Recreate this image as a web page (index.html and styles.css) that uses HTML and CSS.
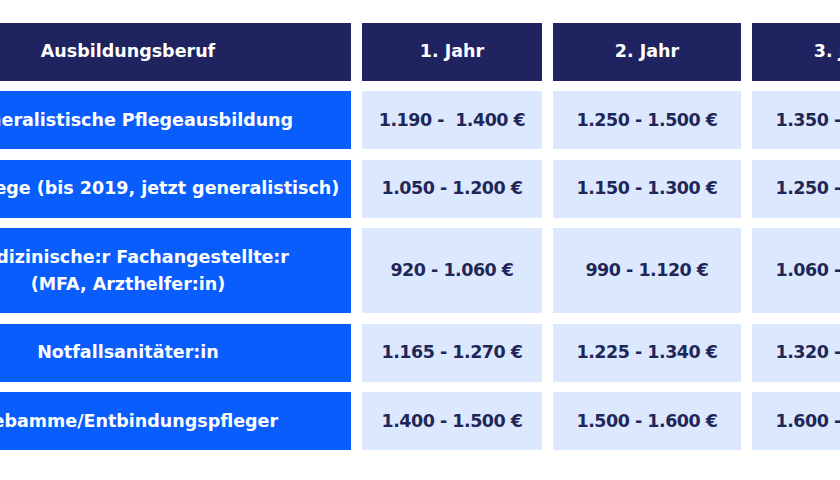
FILE: index.html
```html
<!DOCTYPE html>
<html lang="de">
<head>
<meta charset="utf-8">
<title>Ausbildungsvergütung</title>
<link rel="stylesheet" href="styles.css">
</head>
<body>
<div class="table">
  <div class="cell head">Ausbildungsberuf</div>
  <div class="cell head">1. Jahr</div>
  <div class="cell head">2. Jahr</div>
  <div class="cell head">3. Jahr</div>

  <div class="cell job">Generalistische Pflegeausbildung</div>
  <div class="cell val">1.190 -&nbsp; 1.400 €</div>
  <div class="cell val">1.250 - 1.500 €</div>
  <div class="cell val">1.350 - 1.600 €</div>

  <div class="cell job">Altenpflege (bis 2019, jetzt generalistisch)</div>
  <div class="cell val">1.050 - 1.200 €</div>
  <div class="cell val">1.150 - 1.300 €</div>
  <div class="cell val">1.250 - 1.400 €</div>

  <div class="cell job">Medizinische:r Fachangestellte:r<br>(MFA, Arzthelfer:in)</div>
  <div class="cell val">920 - 1.060 €</div>
  <div class="cell val">990 - 1.120 €</div>
  <div class="cell val">1.060 - 1.190 €</div>

  <div class="cell job">Notfallsanitäter:in</div>
  <div class="cell val">1.165 - 1.270 €</div>
  <div class="cell val">1.225 - 1.340 €</div>
  <div class="cell val">1.320 - 1.420 €</div>

  <div class="cell job">Hebamme/Entbindungspfleger</div>
  <div class="cell val">1.400 - 1.500 €</div>
  <div class="cell val">1.500 - 1.600 €</div>
  <div class="cell val">1.600 - 1.700 €</div>
</div>
</body>
</html>
```
FILE: styles.css
```css
html, body {
  margin: 0;
  padding: 0;
  background: #ffffff;
  overflow: hidden;
  width: 840px;
  height: 480px;
}

.table {
  display: grid;
  grid-template-columns: 446px 180px 188px 188px;
  grid-template-rows: 58px 58px 58px 85px 58px 58px;
  column-gap: 11px;
  row-gap: 10.6px;
  margin: 22.5px 0 0 -95px;
  width: max-content;
  font-family: "DejaVu Sans", "Inter", sans-serif;
  font-size: 17.5px;
  line-height: 27px;
}

.cell {
  display: flex;
  align-items: center;
  justify-content: center;
  text-align: center;
  white-space: nowrap;
}

.head {
  background: #1f235f;
  color: #ffffff;
  font-weight: 700;
}

.job {
  background: #0a5dfd;
  color: #ffffff;
  font-weight: 700;
}

.val {
  background: #dce8fd;
  color: #1f2759;
  font-weight: 700;
  font-size: 17.5px;
  letter-spacing: -0.5px;
}
```
